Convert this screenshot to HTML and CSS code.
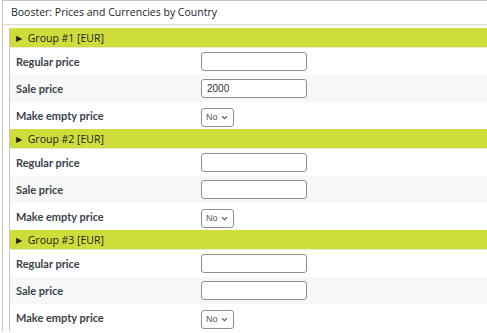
FILE: index.html
```html
<!DOCTYPE html>
<html lang="en">

<head>
    <meta charset="UTF-8">
    <meta name="viewport" content="width=device-width, initial-scale=1.0">
    <title>Booster: Prices and Currencies by Country</title>
    <link rel="stylesheet" href="styles.css">
</head>

<body>

    <div class="postbox">
        <div class="postbox-header">Booster: Prices and Currencies by Country</div>
        <div class="postbox-inside">
            <table class="groups">
                <tbody>
                    <tr class="group-title">
                        <td colspan="2"><span class="arrow">&#9654;</span> Group #1 [EUR]</td>
                    </tr>
                    <tr>
                        <th>Regular price</th>
                        <td><input type="text" class="price-input"></td>
                    </tr>
                    <tr class="alt">
                        <th>Sale price</th>
                        <td><input type="text" class="price-input" value="2000"></td>
                    </tr>
                    <tr>
                        <th>Make empty price</th>
                        <td>
                            <span class="select-wrap">
                                <select class="small-select">
                                    <option>No</option>
                                    <option>Yes</option>
                                </select>
                                <svg class="chevron" width="7" height="5" viewBox="0 0 7 5"><path d="M1 1.2l2.5 2.5 2.5-2.5" fill="none" stroke="#50575e" stroke-width="1.1"/></svg>
                            </span>
                        </td>
                    </tr>

                    <tr class="group-title">
                        <td colspan="2"><span class="arrow">&#9654;</span> Group #2 [EUR]</td>
                    </tr>
                    <tr>
                        <th>Regular price</th>
                        <td><input type="text" class="price-input"></td>
                    </tr>
                    <tr class="alt">
                        <th>Sale price</th>
                        <td><input type="text" class="price-input"></td>
                    </tr>
                    <tr>
                        <th>Make empty price</th>
                        <td>
                            <span class="select-wrap">
                                <select class="small-select">
                                    <option>No</option>
                                    <option>Yes</option>
                                </select>
                                <svg class="chevron" width="7" height="5" viewBox="0 0 7 5"><path d="M1 1.2l2.5 2.5 2.5-2.5" fill="none" stroke="#50575e" stroke-width="1.1"/></svg>
                            </span>
                        </td>
                    </tr>

                    <tr class="group-title">
                        <td colspan="2"><span class="arrow">&#9654;</span> Group #3 [EUR]</td>
                    </tr>
                    <tr>
                        <th>Regular price</th>
                        <td><input type="text" class="price-input"></td>
                    </tr>
                    <tr class="alt">
                        <th>Sale price</th>
                        <td><input type="text" class="price-input"></td>
                    </tr>
                    <tr>
                        <th>Make empty price</th>
                        <td>
                            <span class="select-wrap">
                                <select class="small-select">
                                    <option>No</option>
                                    <option>Yes</option>
                                </select>
                                <svg class="chevron" width="7" height="5" viewBox="0 0 7 5"><path d="M1 1.2l2.5 2.5 2.5-2.5" fill="none" stroke="#50575e" stroke-width="1.1"/></svg>
                            </span>
                        </td>
                    </tr>
                </tbody>
            </table>
        </div>
    </div>

</body>

</html>
```

FILE: styles.css
```css
body {
    margin: 0;
    background: #fff;
    font-family: "Open Sans", "Noto Sans", sans-serif;
    color: #1d2327;
    overflow: hidden;
}

.postbox {
    margin-left: 2px;
    border: 1px solid #c3c4c7;
    border-right: none;
    border-bottom: none;
    background: #fff;
}

.postbox-header {
    height: 23px;
    line-height: 23px;
    padding-left: 8px;
    font-size: 10.5px;
    border-bottom: 1px solid #dcdcde;
}

.postbox-inside {
    padding: 3px 0 0 6px;
}

.groups {
    width: 100%;
    border-collapse: collapse;
    border-left: 1px solid #c3c4c7;
}

.groups td {
    padding: 0;
}

.groups .group-title td {
    height: 19px;
    padding: 0 0 0 6px;
    background: #cedd3a;
    font-size: 10.5px;
    color: #1d2327;
    border-bottom: 1px solid #e8ebd0;
}

.arrow {
    display: inline-block;
    font-size: 8px;
    margin-right: 3px;
    vertical-align: 1px;
}

.groups th {
    width: 185px;
    height: 27px;
    padding: 0 0 0 6px;
    text-align: left;
    font-family: Lato, "Open Sans", sans-serif;
    font-weight: bold;
    font-size: 11px;
    color: #3c434a;
}

.groups tr.alt th,
.groups tr.alt td {
    background: #f6f7f7;
}

.price-input {
    box-sizing: border-box;
    width: 106px;
    height: 19px;
    padding: 0 5px;
    border: 1px solid #8c8f94;
    border-radius: 3px;
    font-family: "Liberation Sans", sans-serif;
    font-size: 10px;
    color: #2c3338;
    background: #fff;
    display: block;
}

.select-wrap {
    position: relative;
    display: inline-block;
    vertical-align: middle;
}

.small-select {
    appearance: none;
    -webkit-appearance: none;
    box-sizing: border-box;
    width: 33px;
    height: 19px;
    padding: 0 0 0 4px;
    border: 1px solid #8c8f94;
    border-radius: 3px;
    background: #fff;
    font-family: "Liberation Sans", sans-serif;
    font-size: 9px;
    color: #50575e;
    display: block;
}

.chevron {
    position: absolute;
    right: 6px;
    top: 7px;
    pointer-events: none;
}
```
